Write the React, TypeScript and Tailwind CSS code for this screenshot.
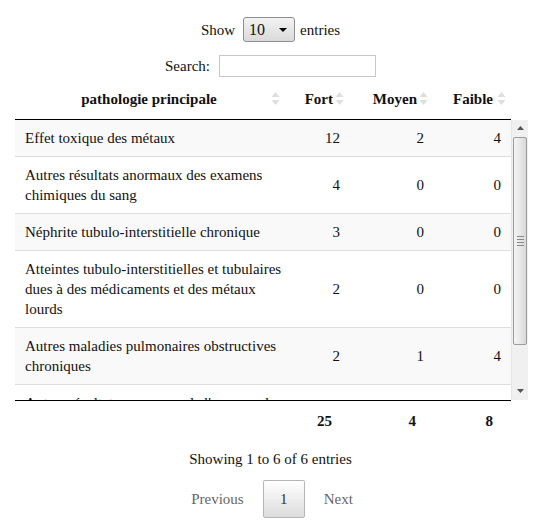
import React from "react";

const rows: { name: string; f: number; m: number; l: number }[] = [
  { name: "Effet toxique des métaux", f: 12, m: 2, l: 4 },
  { name: "Autres résultats anormaux des examens chimiques du sang", f: 4, m: 0, l: 0 },
  { name: "Néphrite tubulo-interstitielle chronique", f: 3, m: 0, l: 0 },
  {
    name: "Atteintes tubulo-interstitielles et tubulaires dues à des médicaments et des métaux lourds",
    f: 2,
    m: 0,
    l: 0,
  },
  { name: "Autres maladies pulmonaires obstructives chroniques", f: 2, m: 1, l: 4 },
  { name: "Autres résultats anormaux de l'examen des urines", f: 2, m: 1, l: 0 },
];

function SortIcon() {
  return (
    <svg width="9" height="19" viewBox="0 0 9 19" className="shrink-0">
      <polygon points="4.5,3 8.5,8 0.5,8" fill="#dedede" />
      <polygon points="4.5,16 8.5,11 0.5,11" fill="#dedede" />
    </svg>
  );
}

function Cols() {
  return (
    <colgroup>
      <col style={{ width: 273 }} />
      <col style={{ width: 62 }} />
      <col style={{ width: 84 }} />
      <col style={{ width: 77 }} />
    </colgroup>
  );
}

function Scrollbar() {
  return (
    <div className="w-[17px] h-full flex flex-col bg-[#f0f0f0] border-l border-[#e6e6e6]">
      <div className="h-[17px] flex items-center justify-center">
        <svg width="7" height="4" viewBox="0 0 7 4">
          <polygon points="3.5,0 7,4 0,4" fill="#555" />
        </svg>
      </div>
      <div className="mx-[1px] h-[208px] rounded-[2px] border border-[#9c9c9c] bg-gradient-to-r from-[#f4f4f4] via-[#e8e8e8] to-[#d8d8d8] flex items-center justify-center">
        <div className="flex flex-col gap-[2px]">
          <div className="w-[7px] h-px bg-[#888]" />
          <div className="w-[7px] h-px bg-[#888]" />
          <div className="w-[7px] h-px bg-[#888]" />
          <div className="w-[7px] h-px bg-[#888]" />
        </div>
      </div>
      <div className="flex-1" />
      <div className="h-[17px] flex items-center justify-center">
        <svg width="7" height="4" viewBox="0 0 7 4">
          <polygon points="0,0 7,0 3.5,4" fill="#555" />
        </svg>
      </div>
    </div>
  );
}

export default function App() {
  return (
    <div
      className="w-[541px] h-[532px] bg-white text-[15px] leading-[20px] text-[#111] px-[15px]"
      style={{ fontFamily: '"Liberation Serif", "Times New Roman", serif' }}
    >
      {/* length */}
      <div className="pt-[17px] flex justify-center items-center">
        <span>Show</span>
        <div className="ml-[8px] mr-[5px] w-[52px] h-[25px] rounded-[3px] border border-[#8e8e8e] bg-gradient-to-b from-[#f3f3f3] to-[#dadada] flex items-center justify-between pl-[5px] pr-[7px]">
          <span className="text-[16px]">10</span>
          <svg width="8" height="4" viewBox="0 0 8 4">
            <polygon points="0,0 8,0 4,4" fill="#000" />
          </svg>
        </div>
        <span>entries</span>
      </div>
      {/* search */}
      <div className="mt-[13px] flex justify-center items-center">
        <span>Search:</span>
        <div className="ml-[9px] w-[157px] h-[22px] border border-[#c8c8c8] bg-white" />
      </div>
      {/* header */}
      <div className="mt-[2px] w-[495px]">
        <table className="table-fixed border-collapse w-[495px]">
          <Cols />
          <thead>
            <tr className="border-b border-black">
              <th className="h-[40px] pl-[10px] pr-[8px] font-bold">
                <div className="flex items-center">
                  <span className="flex-1 text-center pl-[2px]">pathologie principale</span>
                  <SortIcon />
                </div>
              </th>
              <th className="h-[40px] pr-[6px] font-bold">
                <div className="flex items-center justify-end gap-[2px]">
                  <span>Fort</span>
                  <SortIcon />
                </div>
              </th>
              <th className="h-[40px] pr-[6px] font-bold">
                <div className="flex items-center justify-end gap-[2px]">
                  <span>Moyen</span>
                  <SortIcon />
                </div>
              </th>
              <th className="h-[40px] pr-[5px] font-bold">
                <div className="flex items-center justify-end gap-[4px]">
                  <span>Faible</span>
                  <SortIcon />
                </div>
              </th>
            </tr>
          </thead>
        </table>
      </div>
      {/* body */}
      <div className="flex h-[280px] w-[513px]">
        <div className="w-[496px] h-full overflow-hidden">
          <table className="table-fixed border-collapse w-[496px]">
            <Cols />
            <tbody>
              {rows.map((r, i) => (
                <tr key={i} className={i % 2 === 0 ? "bg-[#f9f9f9]" : "bg-white"}>
                  <td className={"py-[8px] pl-[10px] pr-[2px] align-middle " + (i > 0 ? "border-t border-[#dddddd]" : "")}>
                    {r.name}
                  </td>
                  <td className={"py-[8px] px-[10px] text-right align-middle " + (i > 0 ? "border-t border-[#dddddd]" : "")}>
                    {r.f}
                  </td>
                  <td className={"py-[8px] px-[10px] text-right align-middle " + (i > 0 ? "border-t border-[#dddddd]" : "")}>
                    {r.m}
                  </td>
                  <td className={"py-[8px] px-[10px] text-right align-middle " + (i > 0 ? "border-t border-[#dddddd]" : "")}>
                    {r.l}
                  </td>
                </tr>
              ))}
            </tbody>
          </table>
        </div>
        <Scrollbar />
      </div>
      {/* footer */}
      <div className="w-[495px]">
        <table className="table-fixed border-collapse w-[495px]">
          <Cols />
          <tfoot>
            <tr className="border-t border-black">
              <th className="pt-[10px] pb-[6px] px-[18px]"></th>
              <th className="pt-[10px] pb-[6px] pr-[18px] text-right font-bold">25</th>
              <th className="pt-[10px] pb-[6px] pr-[18px] text-right font-bold">4</th>
              <th className="pt-[10px] pb-[6px] pr-[18px] text-right font-bold">8</th>
            </tr>
          </tfoot>
        </table>
      </div>
      {/* info */}
      <div className="mt-[12px] text-center">Showing 1 to 6 of 6 entries</div>
      {/* paginate */}
      <div className="mt-[11px] flex justify-center items-center pl-[3px]">
        <span className="text-[#666] mr-[19px]">Previous</span>
        <div className="w-[42px] h-[38px] rounded-[2px] border border-[#b5b5b5] bg-gradient-to-b from-white to-[#dcdcdc] flex items-center justify-center text-[#333]">
          1
        </div>
        <span className="text-[#666] ml-[19px]">Next</span>
      </div>
    </div>
  );
}
